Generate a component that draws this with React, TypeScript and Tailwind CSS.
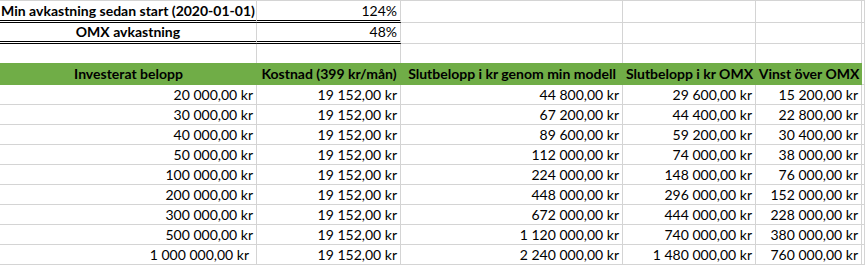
import React from 'react';

type Row = [string, string, string, string, string];

const rows: Row[] = [
  ['20 000,00 kr', '19 152,00 kr', '44 800,00 kr', '29 600,00 kr', '15 200,00 kr'],
  ['30 000,00 kr', '19 152,00 kr', '67 200,00 kr', '44 400,00 kr', '22 800,00 kr'],
  ['40 000,00 kr', '19 152,00 kr', '89 600,00 kr', '59 200,00 kr', '30 400,00 kr'],
  ['50 000,00 kr', '19 152,00 kr', '112 000,00 kr', '74 000,00 kr', '38 000,00 kr'],
  ['100 000,00 kr', '19 152,00 kr', '224 000,00 kr', '148 000,00 kr', '76 000,00 kr'],
  ['200 000,00 kr', '19 152,00 kr', '448 000,00 kr', '296 000,00 kr', '152 000,00 kr'],
  ['300 000,00 kr', '19 152,00 kr', '672 000,00 kr', '444 000,00 kr', '228 000,00 kr'],
  ['500 000,00 kr', '19 152,00 kr', '1 120 000,00 kr', '740 000,00 kr', '380 000,00 kr'],
  ['1 000 000,00 kr', '19 152,00 kr', '2 240 000,00 kr', '1 480 000,00 kr', '760 000,00 kr'],
];

const headers = [
  'Investerat belopp',
  'Kostnad (399 kr/mån)',
  'Slutbelopp i kr genom min modell',
  'Slutbelopp i kr OMX',
  'Vinst över OMX',
];

const cols = 'grid grid-cols-[257px_144px_222px_133px_106px_1fr]';

function Blank({ h }: { h: string }) {
  return <div className={`${h} border-r border-b border-[#d4d4d4]`} />;
}

export default function App() {
  return (
    <div className="w-[865px] h-[265px] overflow-hidden bg-white text-[14px] leading-none text-black font-['Lato','Open_Sans',sans-serif]">
      {/* summary rows */}
      <div className={`${cols} border-t border-[#d4d4d4]`}>
        <div className="h-[22px] flex items-center justify-center font-bold border-r border-r-[#d4d4d4] border-b-[3px] border-double border-b-black">
          Min avkastning sedan start (2020-01-01)
        </div>
        <div className="h-[22px] flex items-center justify-end pr-[3px] border-r border-r-[#d4d4d4] border-b-[3px] border-double border-b-black">
          124%
        </div>
        <Blank h="h-[22px]" />
        <Blank h="h-[22px]" />
        <Blank h="h-[22px]" />
        <Blank h="h-[22px]" />

        <div className="h-[21px] flex items-center justify-center font-bold border-r border-r-[#d4d4d4] border-b-[3px] border-double border-b-black">
          OMX avkastning
        </div>
        <div className="h-[21px] flex items-center justify-end pr-[3px] border-r border-r-[#d4d4d4] border-b-[3px] border-double border-b-black">
          48%
        </div>
        <Blank h="h-[21px]" />
        <Blank h="h-[21px]" />
        <Blank h="h-[21px]" />
        <Blank h="h-[21px]" />

        <div className="h-[19px] border-r border-[#d4d4d4]" />
        <div className="h-[19px] border-r border-[#d4d4d4]" />
        <div className="h-[19px] border-r border-[#d4d4d4]" />
        <div className="h-[19px] border-r border-[#d4d4d4]" />
        <div className="h-[19px] border-r border-[#d4d4d4]" />
        <div className="h-[19px] border-r border-[#d4d4d4]" />

        {/* header */}
        {headers.map((h) => (
          <div
            key={h}
            className="h-[22px] flex items-center justify-center whitespace-nowrap font-bold bg-[#70ad47]"
          >
            {h}
          </div>
        ))}
        <div className="h-[22px] border-r border-b border-[#d4d4d4]" />

        {/* data */}
        {rows.map((r, i) => (
          <React.Fragment key={i}>
            {r.map((v, j) => (
              <div
                key={j}
                className={`h-[20px] flex items-center justify-end whitespace-nowrap border-r border-b border-[#d4d4d4] ${
                  i === rows.length - 1 && j === 0 ? 'pr-[7px]' : 'pr-[3px]'
                }`}
              >
                {v}
              </div>
            ))}
            <div className="h-[20px] border-r border-b border-[#d4d4d4]" />
          </React.Fragment>
        ))}
      </div>
    </div>
  );
}
